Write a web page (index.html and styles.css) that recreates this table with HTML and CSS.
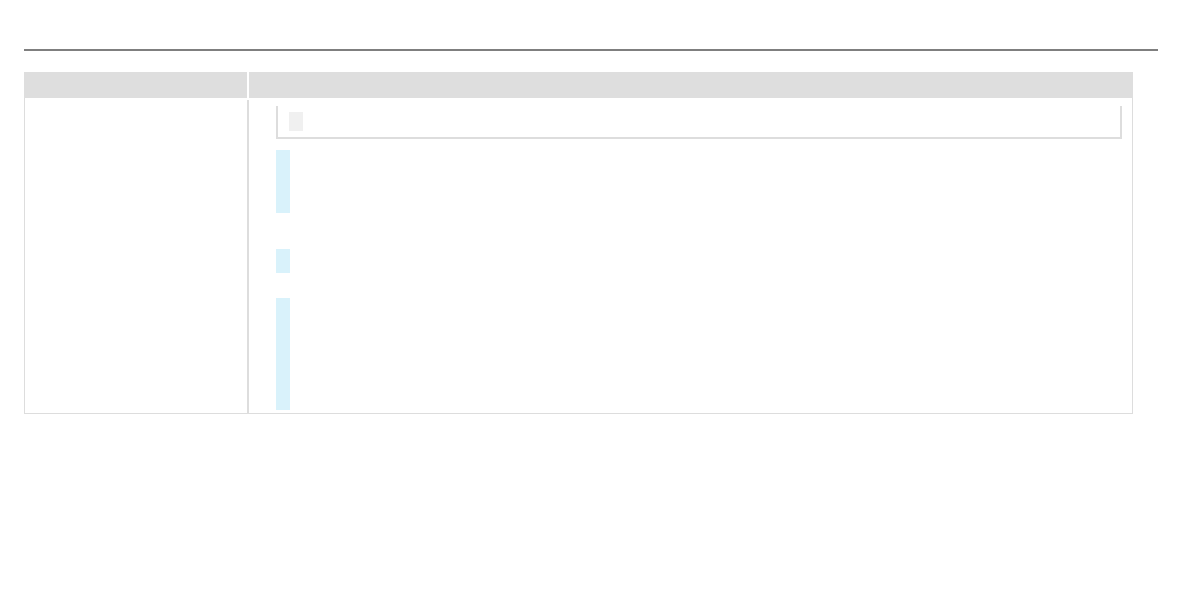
FILE: index.html
```html
<!DOCTYPE html>
<html>
<head>
<meta charset="utf-8">
<link rel="stylesheet" href="styles.css">
</head>
<body>
<div class="page">
  <div class="rule"></div>
  <div class="table">
    <div class="thead">
      <div class="th"></div>
      <div class="th"></div>
    </div>
    <div class="tbody">
      <div class="td-left"></div>
      <div class="td-right">
        <div class="note"><span class="note-mark"></span></div>
        <div class="bar bar1"></div>
        <div class="bar bar2"></div>
        <div class="bar bar3"></div>
      </div>
    </div>
  </div>
</div>
</body>
</html>
```
FILE: styles.css
```css
html, body {
  margin: 0;
  padding: 0;
  background: #ffffff;
  font-family: "Liberation Sans", Arial, sans-serif;
}
.page {
  padding: 49px 0 0 24px;
}
.rule {
  width: 1134px;
  height: 2px;
  background: #7f7f7f;
}
.table {
  margin-top: 21px;
  width: 1109px;
}
.thead {
  display: grid;
  grid-template-columns: 223px 1fr;
  column-gap: 2px;
  height: 26px;
}
.th {
  background: #dedede;
}
.tbody {
  display: grid;
  grid-template-columns: 224px 1fr;
  border-left: 1px solid #dddddd;
  border-right: 1px solid #dddddd;
  border-bottom: 1px solid #dddddd;
}
.td-left {
  margin-top: 2px;
  border-right: 2px solid #dddddd;
}
.td-right {
  padding: 8px 10px 3px 27px;
  display: flex;
  flex-direction: column;
  align-items: flex-start;
}
.note {
  align-self: stretch;
  height: 25px;
  border-left: 2px solid #dddddd;
  border-right: 2px solid #dddddd;
  border-bottom: 2px solid #dddddd;
  padding: 6px 0 0 11px;
}
.note-mark {
  display: block;
  width: 14px;
  height: 19px;
  background: #f0f0f0;
}
.bar {
  width: 14px;
  background: #d9f2fb;
}
.bar1 { margin-top: 11px; height: 63px; }
.bar2 { margin-top: 36px; height: 24px; }
.bar3 { margin-top: 25px; height: 112px; }
```
